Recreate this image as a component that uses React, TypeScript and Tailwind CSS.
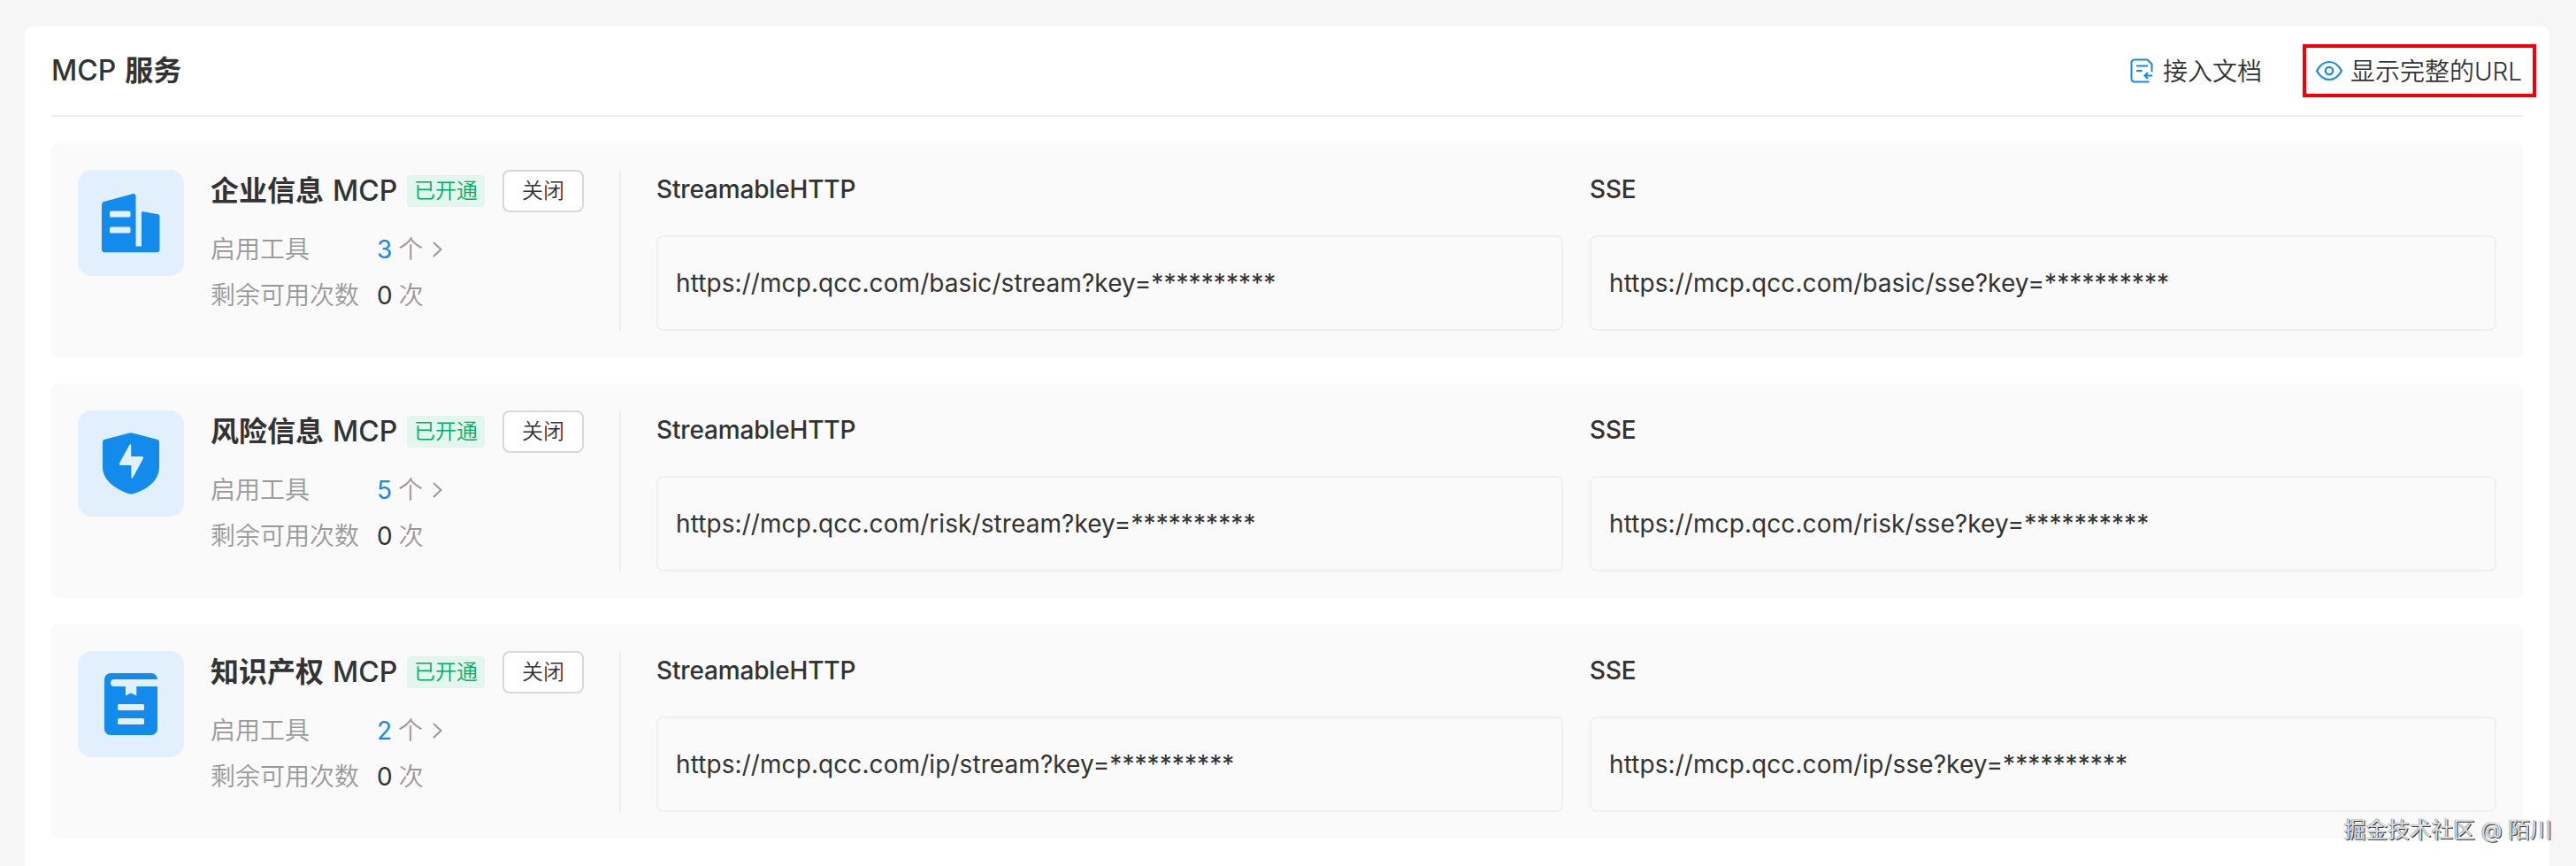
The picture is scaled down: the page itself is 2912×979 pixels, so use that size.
import React from 'react';

interface McpService {
  id: string;
  name: string;
  tools: number;
  remaining: number;
  streamUrl: string;
  sseUrl: string;
  icon: React.ReactNode;
}

const BuildingIcon = () => (
  <svg width="120" height="120" viewBox="0 0 120 120" fill="none">
    <path
      d="M29.5 36 61.700 27.200c2.300-.6 3.800.5 3.800 2.600V86.500H72V49c0-1.200.8-1.900 2-1.700l16.500 3c1.200.2 2 1 2 2.200V90c0 2-1.200 3.300-3.300 3.300H30.300c-2 0-3.300-1.300-3.300-3.300V39.500c0-1.900.9-3 2.500-3.500z"
      fill="#128bed"
    />
    <rect x="36" y="46.500" width="23.500" height="7" rx="1.500" fill="#e1f0fc" />
    <rect x="36" y="64.500" width="23.500" height="7" rx="1.500" fill="#e1f0fc" />
  </svg>
);

const ShieldIcon = () => (
  <svg width="120" height="120" viewBox="0 0 120 120" fill="none">
    <path
      d="M58.300 25.600a5.500 5.500 0 0 1 3.400 0l27.800 7.100c1.500.4 2.500 1.200 2.500 2.800V64c0 17-16.500 26.500-29.600 30.200a8 8 0 0 1-4.800 0C44.500 89.500 28 80 28 64V35.500c0-1.600 1-2.400 2.500-2.800z"
      fill="#128bed"
    />
    <path
      d="M58.600 38.500c.5-1 1.600-.7 1.600.4V52h12c1.700 0 2.300 1.200 1.500 2.700L62.200 76c-.6 1.100-1.800.8-1.800-.4V62H49c-2 0-2.700-1.200-1.800-2.800z"
      fill="#e1f0fc"
    />
  </svg>
);

const BookIcon = () => (
  <svg width="120" height="120" viewBox="0 0 120 120" fill="none">
    <rect x="30" y="25" width="60" height="70" rx="7" fill="#128bed" />
    <path d="M90.500 32v8H66.300v10.500L60 47.600l-6 2.900V40H41a4 4 0 0 1 0-8z" fill="#e1f0fc" />
    <rect x="45" y="60" width="30" height="7" rx="1.500" fill="#e1f0fc" />
    <rect x="45" y="76" width="30" height="7" rx="1.500" fill="#e1f0fc" />
  </svg>
);

const DocIcon = () => (
  <svg width="28" height="28" viewBox="0 0 28 28" fill="none" stroke="#128bed" strokeWidth="2">
    <path d="M22.500 26.500H6A3.500 3.500 0 0 1 2.500 23V5A3.500 3.500 0 0 1 6 1.500h14.500l5 5V15" strokeLinejoin="round" />
    <path d="M8 8.500h13M8 14h6.500" />
    <path d="M26 19.500h-8.500M21 16l-3.500 3.500L21 23" />
  </svg>
);

const EyeIcon = () => (
  <svg width="32" height="24" viewBox="0 0 32 24" fill="none" stroke="#128bed" strokeWidth="2.200">
    <path d="M2 12C5.500 5.500 10.300 2 16 2s10.500 3.500 14 10c-3.500 6.500-8.300 10-14 10S5.500 18.500 2 12z" strokeLinejoin="round" />
    <circle cx="16" cy="12" r="4.200" />
  </svg>
);

const ArrowIcon = () => (
  <svg width="12" height="20" viewBox="0 0 12 20" fill="none" stroke="#999" strokeWidth="2">
    <path d="m2 2 8.500 8L2 18" />
  </svg>
);

const services: McpService[] = [
  {
    id: 'basic',
    name: '企业信息',
    tools: 3,
    remaining: 0,
    streamUrl: 'https://mcp.qcc.com/basic/stream?key=**********',
    sseUrl: 'https://mcp.qcc.com/basic/sse?key=**********',
    icon: <BuildingIcon />,
  },
  {
    id: 'risk',
    name: '风险信息',
    tools: 5,
    remaining: 0,
    streamUrl: 'https://mcp.qcc.com/risk/stream?key=**********',
    sseUrl: 'https://mcp.qcc.com/risk/sse?key=**********',
    icon: <ShieldIcon />,
  },
  {
    id: 'ip',
    name: '知识产权',
    tools: 2,
    remaining: 0,
    streamUrl: 'https://mcp.qcc.com/ip/stream?key=**********',
    sseUrl: 'https://mcp.qcc.com/ip/sse?key=**********',
    icon: <BookIcon />,
  },
];

const UrlBox: React.FC<{ label: string; url: string }> = ({ label, url }) => (
  <div className="flex-1 min-w-0">
    <div className="h-[44px] leading-[45px] font-medium tracking-[-0.16px]">{label}</div>
    <div className="mt-[30px] h-[108px] flex items-center px-5 border-2 border-[#f0f0f0] rounded-lg">
      <span className="tracking-[0.08px]">{url}</span>
    </div>
  </div>
);

const ServiceCard: React.FC<{ service: McpService }> = ({ service }) => (
  <div className="h-[242px] flex p-[30px] bg-[#fafafa] rounded-lg">
    <div className="w-[120px] h-[120px] shrink-0 rounded-[16px] bg-[#e1f0fc]">{service.icon}</div>
    <div className="ml-[30px] w-[462px] shrink-0">
      <div className="flex items-center h-[48px]">
        <h2 className="text-[32px] leading-[48px] font-semibold whitespace-nowrap w-[222px] [word-spacing:2px]">
          {service.name} <span className="font-medium">MCP</span>
        </h2>
        <span className="h-[36px] leading-[36px] px-2 text-[24px] font-[350] text-[#00ad65] bg-[#e3f7ee] rounded-[4px]">已开通</span>
        <button className="ml-5 w-[92px] h-[48px] text-[24px] leading-[44px] font-[350] bg-white border-2 border-[#d8d8d8] rounded-lg">
          关闭
        </button>
      </div>
      <div className="mt-[16px] text-[#999] font-[350]">
        <div className="flex items-center h-[52px]">
          <span className="w-[188px]">启用工具</span>
          <span className="text-[#128bed] font-normal mr-[7px]">{service.tools}</span>
          <span className="mr-[10px]">个</span>
          <ArrowIcon />
        </div>
        <div className="flex items-center h-[52px]">
          <span className="w-[188px]">剩余可用次数</span>
          <span className="text-[#333] font-normal mr-[7px]">{service.remaining}</span>
          <span>次</span>
        </div>
      </div>
    </div>
    <div className="flex-1 flex gap-[30px] pl-10 border-l-2 border-[#eee]">
      <UrlBox label="StreamableHTTP" url={service.streamUrl} />
      <UrlBox label="SSE" url={service.sseUrl} />
    </div>
  </div>
);

export default function App() {
  return (
    <div className="relative w-[2912px] h-[979px] overflow-hidden bg-[#f6f6f6] pt-[30px] pl-[28px] pr-[30px] text-[28px] text-[#333] font-['Inter','Noto_Sans_CJK_SC',sans-serif]">
      <div className="h-[949px] bg-white rounded-t-lg px-[30px]">
        <div className="flex items-center justify-between h-[102px] border-b-2 border-[#eee]">
          <h1 className="text-[32px] font-semibold [word-spacing:2px]">
            <span className="font-medium">MCP</span> 服务
          </h1>
          <div className="flex items-center -mr-[15px] font-[350]">
            <div className="flex items-center gap-[10px] mr-[46px]">
              <DocIcon />
              <span className="pt-px">接入文档</span>
            </div>
            <div className="flex items-center gap-2 w-[264px] h-[60px] pl-[10px] border-4 border-[#f5000a] whitespace-nowrap">
              <EyeIcon />
              <span className="pt-px">显示完整的URL</span>
            </div>
          </div>
        </div>
        <div className="flex flex-col gap-[30px] pt-[30px]">
          {services.map((service) => (
            <ServiceCard key={service.id} service={service} />
          ))}
        </div>
      </div>
      <div className="absolute right-[27px] bottom-[22px] text-[24.7px] leading-[38px] text-[#dedede] [text-shadow:1px_1px_0_#333,-0.5px_-0.5px_1px_#777]">
        掘金技术社区 @ 陌川
      </div>
    </div>
  );
}
